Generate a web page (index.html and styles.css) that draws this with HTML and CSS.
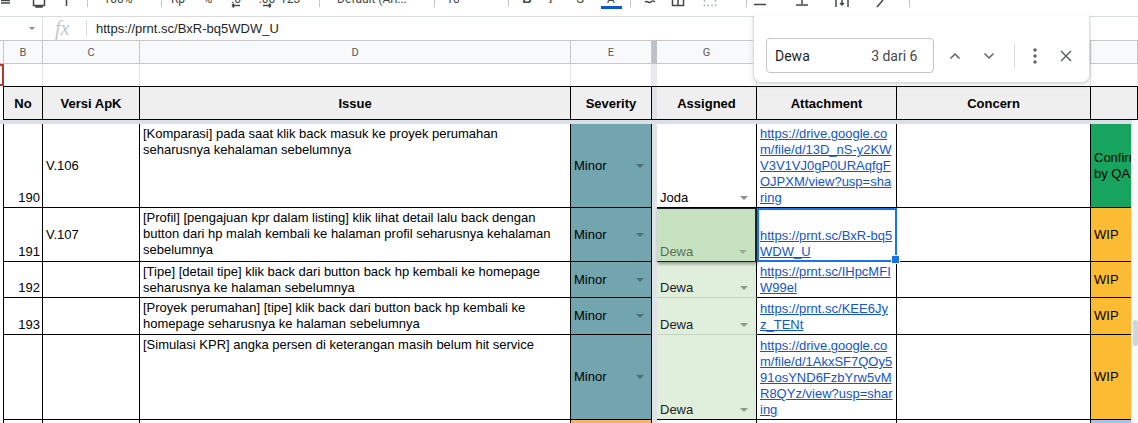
FILE: index.html
```html
<!DOCTYPE html>
<html lang="id">
<head>
<meta charset="utf-8">
<title>Bug list</title>
<link rel="stylesheet" href="styles.css">
</head>
<body>
<div class="app">
  <div class="toolbar">
    <span class="ic"><svg width="12" height="8" viewBox="0 0 12 8"><path d="M1 0.5h9M1 3h9"/></svg></span>
    <i></i>
    <span class="ic"><svg width="14" height="8" viewBox="0 0 14 8"><path d="M1.5 0v5.5h11V0M4 5.5V7h6V5.5"/></svg></span>
    <i></i>
    <span class="ic"><svg width="7" height="8" viewBox="0 0 7 8"><path d="M3.5 0v6"/></svg></span>
    <i></i>
    <b class="sep"></b>
    <i></i>
    <span class="tt">100%</span>
    <i></i>
    <b class="sep"></b>
    <span class="tt">Rp</span>
    <span class="tt">%</span>
    <span class="tcol"><span class="tt">.0</span><svg class="arr" width="12" height="5" viewBox="0 0 12 5"><path d="M2 2.5h8M2 2.5l2-2M2 2.5l2 2"/></svg></span>
    <span class="tcol"><span class="tt">.00</span><svg class="arr" width="12" height="5" viewBox="0 0 12 5"><path d="M2 2.5h8M10 2.5l-2-2M10 2.5l-2 2"/></svg></span>
    <span class="tt">123</span>
    <i></i>
    <b class="sep"></b>
    <span class="tt tl">Default (Ari...</span>
    <b class="sep"></b>
    <span class="tt">10</span>
    <i></i>
    <b class="sep"></b>
    <i></i>
    <span class="tt tb">B</span>
    <span class="tt ti">I</span>
    <i></i>
    <span class="tt ts">S</span>
    <i></i>
    <span class="tcol"><span class="tt">A</span><b class="abar"></b></span>
    <i></i>
    <b class="sep"></b>
    <i></i>
    <span class="ic"><svg width="14" height="8" viewBox="0 0 14 8"><path d="M2 2c2-2 4 2 6 0s3-1 4 0"/></svg></span>
    <span class="ic"><svg width="14" height="8" viewBox="0 0 14 8"><path d="M1.5 0v5.5h11V0M7 0v5.5"/></svg></span>
    <i></i>
    <span class="ic light"><svg width="14" height="8" viewBox="0 0 14 8"><path d="M1.5 0v5.5h11V0" stroke-dasharray="2 2"/></svg></span>
    <i></i>
    <b class="sep"></b>
    <span class="ic"><svg width="14" height="8" viewBox="0 0 14 8"><path d="M1 4.5h12"/></svg></span>
    <i></i>
    <span class="ic"><svg width="14" height="8" viewBox="0 0 14 8"><path d="M1 5h12M7 0v4"/></svg></span>
    <i></i>
    <span class="ic"><svg width="14" height="8" viewBox="0 0 14 8"><path d="M1 0v7M13 0v7M7 0v5M5 3l2 2 2-2"/></svg></span>
    <i></i>
    <span class="ic"><svg width="14" height="8" viewBox="0 0 14 8"><path d="M4 7l6-7"/></svg></span>
    <i></i>
    <b class="sep"></b>
  </div>

  <div class="formula">
    <div class="namebox"><span class="nbarrow"></span></div>
    <div class="fx">fx</div>
    <div class="vsep"></div>
    <div class="fval">https://prnt.sc/BxR-bq5WDW_U</div>
  </div>

  <div class="sheet">
    <!-- column letters -->
    <div class="L"></div>
    <div class="L">B</div>
    <div class="L">C</div>
    <div class="L">D</div>
    <div class="L">E</div>
    <div class="L frz"></div>
    <div class="L">G</div>
    <div class="L"></div>
    <div class="L"></div>
    <div class="L"></div>

    <!-- blank row -->
    <div class="E red"></div>
    <div class="E"></div>
    <div class="E"></div>
    <div class="E"></div>
    <div class="E"></div>
    <div class="E frz"></div>
    <div class="E"></div>
    <div class="E"></div>
    <div class="E"></div>
    <div class="E"></div>

    <!-- header -->
    <div class="H a"></div>
    <div class="H">No</div>
    <div class="H">Versi ApK</div>
    <div class="H">Issue</div>
    <div class="H">Severity</div>
    <div class="H frz"></div>
    <div class="H">Assigned</div>
    <div class="H">Attachment</div>
    <div class="H">Concern</div>
    <div class="H"></div>

    <div class="band"></div>

    <!-- 190 -->
    <div class="c a"></div>
    <div class="c num">190</div>
    <div class="c ver">V.106</div>
    <div class="c iss">[Komparasi] pada saat klik back masuk ke proyek perumahan<br>seharusnya kehalaman sebelumnya</div>
    <div class="c sev"><span>Minor</span><i class="dd"></i></div>
    <div class="frz"></div>
    <div class="c asg"><span>Joda</span><i class="dd"></i></div>
    <div class="c att"><a href="#">https://drive.google.co<br>m/file/d/13D_nS-y2KW<br>V3V1VJ0gP0URAqfgF<br>OJPXM/view?usp=sha<br>ring</a></div>
    <div class="c"></div>
    <div class="c st ok">Confirmed<br>by QA</div>

    <!-- 191 -->
    <div class="c a"></div>
    <div class="c num">191</div>
    <div class="c ver">V.107</div>
    <div class="c iss">[Profil] [pengajuan kpr dalam listing] klik lihat detail lalu back dengan<br>button dari hp malah kembali ke halaman profil seharusnya kehalaman<br>sebelumnya</div>
    <div class="c sev"><span>Minor</span><i class="dd"></i></div>
    <div class="frz"></div>
    <div class="c asg cur"><span>Dewa</span><i class="dd"></i></div>
    <div class="c att sel"><a href="#">https://prnt.sc/BxR-bq5<br>WDW_U</a></div>
    <div class="c"></div>
    <div class="c st wip">WIP</div>

    <!-- 192 -->
    <div class="c a"></div>
    <div class="c num">192</div>
    <div class="c ver"></div>
    <div class="c iss">[Tipe] [detail tipe] klik back dari button back hp kembali ke homepage<br>seharusnya ke halaman sebelumnya</div>
    <div class="c sev"><span>Minor</span><i class="dd"></i></div>
    <div class="frz"></div>
    <div class="c asg hit"><span>Dewa</span><i class="dd"></i></div>
    <div class="c att"><a href="#">https://prnt.sc/IHpcMFI<br>W99el</a></div>
    <div class="c"></div>
    <div class="c st wip">WIP</div>

    <!-- 193 -->
    <div class="c a"></div>
    <div class="c num">193</div>
    <div class="c ver"></div>
    <div class="c iss">[Proyek perumahan] [tipe] klik back dari button back hp kembali ke<br>homepage seharusnya ke halaman sebelumnya</div>
    <div class="c sev"><span>Minor</span><i class="dd"></i></div>
    <div class="frz"></div>
    <div class="c asg hit"><span>Dewa</span><i class="dd"></i></div>
    <div class="c att"><a href="#">https://prnt.sc/KEE6Jy<br>z_TENt</a></div>
    <div class="c"></div>
    <div class="c st wip">WIP</div>

    <!-- 194 -->
    <div class="c a"></div>
    <div class="c num"></div>
    <div class="c ver"></div>
    <div class="c iss">[Simulasi KPR] angka persen di keterangan masih belum hit service</div>
    <div class="c sev"><span>Minor</span><i class="dd"></i></div>
    <div class="frz"></div>
    <div class="c asg hit last"><span>Dewa</span><i class="dd"></i></div>
    <div class="c att"><a href="#">https://drive.google.co<br>m/file/d/1AkxSF7QOy5<br>91osYND6FzbYrw5vM<br>R8QYz/view?usp=shar<br>ing</a></div>
    <div class="c"></div>
    <div class="c st wip">WIP</div>

    <!-- 195 (partial) -->
    <div class="c a p"></div>
    <div class="c p"></div>
    <div class="c p"></div>
    <div class="c p"></div>
    <div class="c p major"></div>
    <div class="frz"></div>
    <div class="c p"></div>
    <div class="c p"></div>
    <div class="c p"></div>
    <div class="c p blue"></div>

    <div class="vscroll"><div class="thumb"></div></div>
  </div>

  <div class="find">
    <div class="finput"><span class="fq">Dewa</span><span class="fcount">3 dari 6</span></div>
    <span class="fbtn up"><svg width="12" height="8" viewBox="0 0 12 8"><path d="M1.5 6.5L6 2l4.5 4.5"/></svg></span>
    <span class="fbtn dn"><svg width="12" height="8" viewBox="0 0 12 8"><path d="M1.5 1.5L6 6l4.5-4.5"/></svg></span>
    <b class="fsep"></b>
    <span class="fbtn dots"><svg width="4" height="16" viewBox="0 0 4 16"><circle cx="2" cy="2" r="1.7"/><circle cx="2" cy="8" r="1.7"/><circle cx="2" cy="14" r="1.7"/></svg></span>
    <span class="fbtn close"><svg width="12" height="12" viewBox="0 0 12 12"><path d="M1 1l10 10M11 1L1 11"/></svg></span>
  </div>
</div>
</body>
</html>
```

FILE: styles.css
```css
* { box-sizing: border-box; margin: 0; padding: 0; }
html, body { width: 1138px; height: 423px; overflow: hidden; background: #fff; }
body { font-family: "Liberation Sans", Arial, sans-serif; font-size: 13px; color: #000; }
.app { position: relative; width: 1138px; height: 423px; overflow: hidden; }

/* ---------- toolbar (cropped at top) ---------- */
.toolbar {
  display: grid;
  grid-template-columns: 12px 20px 14px 17px 7px 17px 1px 12px 36px 25px 1px 32px 28px 28px 34px 12px 23px 1px 114px 1px 36px 37px 1px 6px 24px 24px 5px 24px 7px 24px 7px 1px 5px 28px 28px 4px 28px 22px 1px 26px 16px 26px 14px 26px 12px 26px 16px 1px;
  height: 17px;
  border-bottom: 1px solid #dadce0;
  overflow: hidden;
  font-family: Roboto, "Liberation Sans", sans-serif;
  font-size: 12px;
  color: #444746;
}
.toolbar > * { display: flex; flex-direction: column; align-items: center; min-width: 0; }
.tt { line-height: 14px; margin-top: -8px; white-space: nowrap; }
.tl { align-items: flex-start; padding-left: 17px; }
.tb { font-weight: bold; font-family: "Liberation Sans", sans-serif; font-size: 13px; }
.ti { font-style: italic; font-family: "Liberation Serif", serif; font-size: 13px; }
.ts { text-decoration: line-through; font-size: 13px; }
.sep { background: #c7c7c7; height: 7px; }
.toolbar svg { display: block; }
.toolbar path { fill: none; stroke: #444746; stroke-width: 1.5; }
.light path { stroke: #b8bbbe; }
.arr { margin-top: -3px; }
.abar { width: 21px; height: 3px; background: #0b57d0; }

/* ---------- formula bar ---------- */
.formula { display: flex; align-items: center; height: 24px; border-bottom: 1px solid #c7c7c7; }
.namebox {
  width: 43px; height: 23px; border-right: 1px solid #e0e0e0;
  display: flex; align-items: center; justify-content: flex-end; padding-right: 7px;
}
.nbarrow { width: 0; height: 0; border-left: 3px solid transparent; border-right: 3px solid transparent; border-top: 3px solid #80868b; }
.fx {
  width: 43px; padding-left: 12px;
  font-family: "Liberation Serif", serif; font-style: italic; font-size: 20px; line-height: 23px; color: #c4c7c5;
}
.vsep { width: 1px; height: 17px; background: #dadce0; }
.fval { padding-left: 9px; font-size: 13px; color: #1f1f1f; }

/* ---------- sheet grid ---------- */
.sheet {
  position: relative;
  display: grid;
  grid-template-columns: 4px 39px 97px 431px 81px 5px 100px 140px 194px 47px;
  grid-template-rows: 23px 22px 34px 4px 84px 54px 36px 37px 85px 20px;
}
.L {
  background: #f8f9fa; border-right: 1px solid #c7c7c7; border-bottom: 1px solid #c7c7c7;
  display: flex; align-items: center; justify-content: center;
  font-family: Roboto, "Liberation Sans", sans-serif; font-size: 11px; color: #575a5e;
}
.L.frz { background: #bdc1c6; border: none; }

.E { border-right: 1px solid #e2e3e3; }
.E.frz { background: #e8eaed; border: none; }
.E.red { border: 2px solid #b7372b; border-left: none; }

.H {
  background: #efefef; border-top: 1px solid #000; border-right: 1px solid #000; border-bottom: 1px solid #000;
  display: flex; align-items: center; justify-content: center; font-weight: bold;
}
.H.a { background: #fff; border-top: none; border-bottom: none; }
.H.frz { background: #dfe3e8; border-right: none; }

.band { grid-column: 1 / -1; background: #dae0e7; }

.frz { background: #dfe3e8; }

.c {
  border-right: 1px solid #000; border-bottom: 1px solid #000;
  padding: 0 3px; line-height: 16px;
  display: flex; flex-direction: column; overflow: hidden; white-space: nowrap;
}
.c.a { padding: 0; border-bottom: none; }
.c.p { border-bottom: none; }
.num { justify-content: flex-end; align-items: flex-end; padding-right: 2px; padding-bottom: 1px; }
.ver { justify-content: center; }
.iss { justify-content: flex-start; padding-top: 2px; }
.sev {
  flex-direction: row; align-items: center; justify-content: space-between;
  background: #73a5af; padding-right: 7px;
}
.sev .dd { border-top-color: rgba(0, 0, 0, 0.32); }
.asg {
  flex-direction: row; align-items: flex-end; justify-content: space-between;
  padding-bottom: 1px; padding-right: 8px;
}
.dd {
  width: 0; height: 0; margin-bottom: 6px;
  border-left: 4px solid transparent; border-right: 4px solid transparent; border-top: 4px solid #8e8e8e;
}
.sev .dd { margin-bottom: 0; }
.hit { background: #e0efdc; border-bottom-color: rgba(0, 0, 0, 0.12); color: #222; }
.hit.last { border-bottom-color: #000; }
.hit .dd { border-top-color: #8d998a; }
.cur {
  position: relative; z-index: 1;
  background: #c6e2c1; color: #5c6e58;
  border-top: 1px solid #202124; border-right: 2px solid #202124; border-bottom: 1px solid #202124;
  box-shadow: 1px 2px 3px rgba(0, 0, 0, 0.35);
}
.cur .dd { border-top-color: #9aab96; }
.att { justify-content: flex-end; padding-bottom: 1px; }
.att a { color: #1155cc; text-decoration: underline; }
.sel { position: relative; z-index: 2; outline: 2px solid #1a73e8; outline-offset: -2px; overflow: visible; }
.sel::after {
  content: ""; position: absolute; right: -4px; bottom: -3px;
  width: 7px; height: 7px; background: #1a73e8; border: 1px solid #fff;
}
.st { justify-content: center; }
.ok { background: #16a45e; }
.wip { background: #fbbc34; }
.major { background: #f6b26b; }
.blue { background: #a4c2f4; }

.vscroll {
  position: absolute; right: 0; top: 79px; bottom: 0; width: 7px;
  background: #fafafa; border-left: 1px solid #e3e3e3; z-index: 3;
}
.thumb { position: absolute; left: 1px; right: 0; top: 200px; height: 26px; background: #d3d6d9; border-radius: 3px; }

/* ---------- find panel ---------- */
.find {
  position: absolute; left: 753px; top: 16px; width: 337px; height: 67px; z-index: 5;
  background: #fff; border: 1px solid #dadce0; border-top: none; border-radius: 0 0 8px 8px;
  box-shadow: 0 1px 2px rgba(60, 64, 67, 0.12), 0 2px 6px 1px rgba(60, 64, 67, 0.08);
  display: flex; align-items: center; padding: 22px 8px 9px 12px;
  font-family: Roboto, "Liberation Sans", sans-serif; font-size: 14px;
}
.finput {
  width: 169px; height: 35px; border: 1px solid #c4c7c5; border-radius: 4px;
  display: flex; align-items: center; justify-content: space-between; padding: 0 16px 0 8px;
}
.fq { color: #1f1f1f; }
.fcount { color: #444746; }
.fbtn { width: 32px; height: 32px; display: flex; align-items: center; justify-content: center; }
.fbtn svg path { fill: none; stroke: #5f6368; stroke-width: 1.5; }
.fbtn svg circle { fill: #5f6368; }
.up { margin-left: 5px; }
.dn { margin-left: 2px; }
.fsep { width: 1px; height: 26px; background: #dadce0; margin-left: 9px; margin-right: 4px; }
.close { width: 30px; }
```
